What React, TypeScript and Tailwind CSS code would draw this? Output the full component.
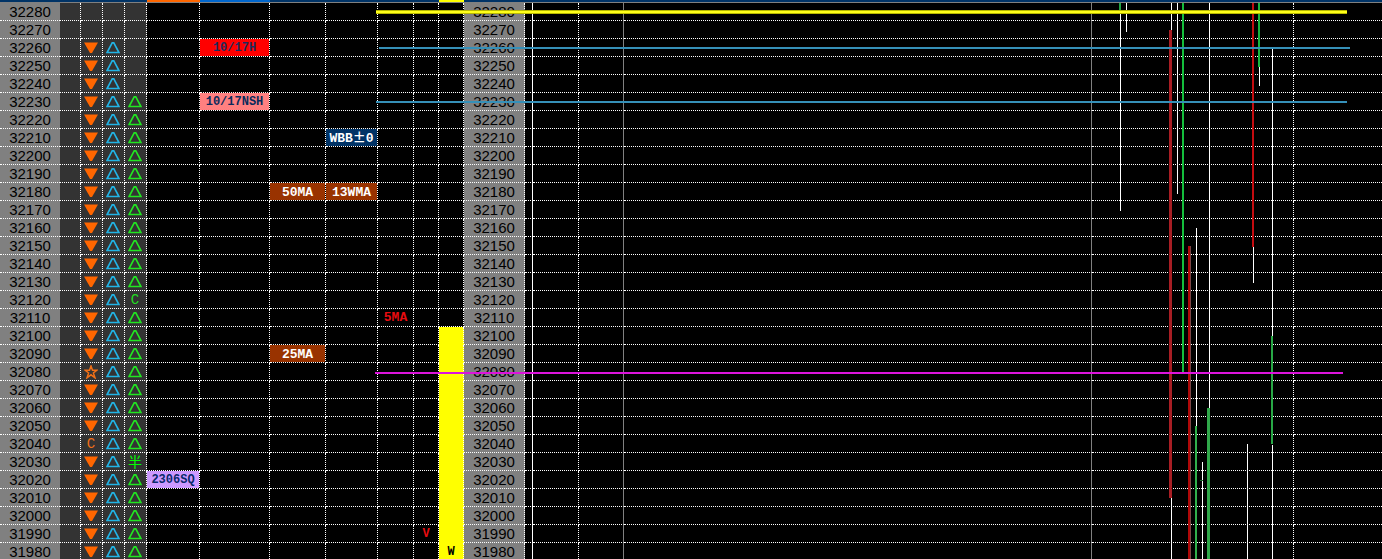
import type { ReactNode } from "react";
import clsx from "clsx";

type Tag = { col: string; text: ReactNode; className: string };

const TOP = 32280;
const prices = Array.from({ length: 31 }, (_, i) => TOP - i * 10);

// undefined width = the column that takes the spare room
const columns: { id: string; width?: number; head?: string; line?: string; cell?: string }[] = [
  { id: "price", width: 60, line: "no-line", cell: "bg-[#808080]" },
  { id: "s0", width: 21, cell: "bg-[#333333]" },
  { id: "s1", width: 22, cell: "bg-[#333333] pr-px" },
  { id: "s2", width: 22, cell: "bg-[#333333] pr-px" },
  { id: "s3", width: 22, cell: "bg-[#333333] pr-px" },
  { id: "sq", width: 53, head: "bg-[#ff6600]" },
  { id: "high", width: 70, head: "bg-[#0066cc]" },
  { id: "day", width: 56 },
  { id: "week", width: 52 },
  { id: "ma", width: 36 },
  { id: "v", width: 25 },
  { id: "w", width: 25, head: "bg-[#ffff00]" },
  { id: "price2", width: 61, cell: "bg-[#808080]" },
  { id: "c0", width: 8, line: "white" },
  { id: "c1", width: 46 },
  { id: "c2", width: 45, line: "gray" },
  { id: "c3", line: "gray" },
  { id: "c4", width: 202 },
  { id: "c5", width: 88, line: "no-line" },
];

const tags: Record<number, Tag[]> = {
  32260: [{ col: "high", text: "10/17H", className: "bg-[#ff0000] text-[#1f2a5c] text-[12px] pt-0.5" }],
  32230: [{ col: "high", text: "10/17NSH", className: "bg-[#ff8080] text-[#0a2a5c] text-[12px] pt-0.5" }],
  32210: [
    {
      col: "week",
      text: (
        <>
          WBB<span className="font-['Noto_Sans_CJK_JP',sans-serif]">±</span>0
        </>
      ),
      className: "bg-[#003366] text-white text-[13px]",
    },
  ],
  32180: [
    { col: "day", text: "50MA", className: "bg-[#993300] text-white text-[13px] pt-0.5" },
    { col: "week", text: "13WMA", className: "bg-[#993300] text-white text-[13px] pt-0.5" },
  ],
  32110: [{ col: "ma", text: "5MA", className: "text-[#e80c10] text-[13px]" }],
  32090: [{ col: "day", text: "25MA", className: "bg-[#993300] text-white text-[13px] pt-0.5" }],
  32020: [{ col: "sq", text: "2306SQ", className: "bg-[#cc99ff] text-[#0a2a6c] text-[12px] pt-0.5" }],
  31990: [{ col: "v", text: "V", className: "text-[#e80c10] text-[12px] pt-0.5" }],
  31980: [{ col: "w", text: "W", className: "text-black text-[12px] pt-0.5" }],
};

const levels = [
  { id: "y", className: "top-[10px] left-[376px] right-[35px] h-1 border-y border-[#b8b800] bg-[#ffff1a]" },
  { id: "b1", className: "top-[47px] left-[379px] right-[32px] h-[2px] bg-[#3590b8]" },
  { id: "b2", className: "top-[101px] left-[376px] right-[35px] h-[2px] bg-[#3590b8]" },
  { id: "m", className: "top-[372px] left-[375px] right-[39px] h-[2px] bg-[#dc14dc]" },
];

// [x, top, bottom]
const wicks = [
  [40, 3, 211],
  [46, 3, 32],
  [91, 3, 30],
  [91, 498, 561],
  [97, 3, 194],
  [116, 228, 426],
  [122, 462, 561],
  [129, 3, 408],
  [167, 444, 561],
  [173, 247, 283],
  [179, 67, 86],
  [192, 49, 336],
  [192, 445, 561],
];

// [x, width, top, bottom, colour]
const bodies: [number, number, number, number, string][] = [
  [39, 2, 3, 13, "#22a545"],
  [89, 3, 30, 498, "#a81e24"],
  [102, 2, 3, 373, "#14be3c"],
  [108, 2, 246, 561, "#b00808"],
  [110, 1, 246, 561, "#7c4444"],
  [115, 2, 426, 561, "#30b04c"],
  [127, 3, 408, 561, "#30a84a"],
  [172, 2, 3, 247, "#c40c10"],
  [178, 2, 3, 67, "#18b43c"],
  [191, 2, 336, 444, "#28a846"],
  [120, 3, 480, 481, "#1c6a2c"],
];

function Down() {
  return (
    <svg aria-hidden="true" className="mx-auto block h-3 w-3.5" viewBox="0 0 14 12">
      <path d="M0 0.5H14L8 11H6Z" fill="#ff6600" />
    </svg>
  );
}

function Up({ color }: { color: string }) {
  return (
    <svg aria-hidden="true" className="mx-auto block h-3 w-3.5" viewBox="0 0 14 12">
      <path d="M1.1 10.5L6.2 0.9H7.8L12.9 10.5Z" fill="none" stroke={color} strokeWidth="1.6" />
    </svg>
  );
}

function Star() {
  return (
    <svg aria-hidden="true" className="mx-auto block h-3.5 w-3.5" viewBox="0 0 14 14">
      <path
        d="M7 1L8.5 5.2H13L9.4 8L11 12.8L7 9.8L3 12.8L4.6 8L1 5.2H5.5Z"
        fill="none"
        stroke="#f07018"
        strokeWidth="1.5"
      />
    </svg>
  );
}

function signal(col: string, price: number): ReactNode {
  if (price > 32260) return null;
  if (col === "s1") {
    if (price === 32080) return <Star />;
    if (price === 32040) return <div className="pt-0.5 text-[14px] text-[#f07018]">C</div>;
    return <Down />;
  }
  if (col === "s2") return <Up color="#22b4e6" />;
  if (col === "s3" && price <= 32230) {
    if (price === 32120) return <div className="pt-0.5 text-[14px] text-[#22dc22]">C</div>;
    if (price === 32030)
      return <div className="font-['Noto_Sans_CJK_JP',sans-serif] text-[14px] text-[#00ff00]">半</div>;
    return <Up color="#22e622" />;
  }
  return null;
}

function lineClass(line?: string) {
  if (line === "no-line") return "";
  if (line === "white") return "border-r [border-right-style:solid] border-r-white";
  if (line === "gray") return "border-r [border-right-style:solid] border-r-[#808080]";
  return "border-r [border-right-style:dotted] border-r-white";
}

export default function App() {
  return (
    <main className="relative h-screen overflow-hidden bg-black">
      <table className="w-full table-fixed border-separate border-spacing-0 font-['Liberation_Mono','Noto_Sans_CJK_JP',monospace]">
        <colgroup>
          {columns.map((c) => (
            <col key={c.id} style={{ width: c.width }} />
          ))}
        </colgroup>
        <thead>
          <tr className="h-[3px]">
            {columns.map((c) => (
              <td key={c.id} className={clsx("border-b border-[#808080] p-0", c.head ?? "bg-[#003366]")} />
            ))}
          </tr>
        </thead>
        <tbody>
          {prices.map((price) => (
            <tr key={price} className="h-[18px]">
              {columns.map((c) => {
                const tag = tags[price]?.find((t) => t.col === c.id);
                const isPrice = c.id === "price" || c.id === "price2";
                const filled = c.id === "w" && price <= 32100;
                return (
                  <td
                    key={c.id}
                    className={clsx(
                      "border-b p-0 text-center align-middle leading-[15px] whitespace-nowrap",
                      filled
                        ? "border-b-[#ffff00] bg-[#ffff00] [border-bottom-style:solid]"
                        : "border-b-white [border-bottom-style:dotted]",
                      lineClass(c.line),
                      c.cell,
                      isPrice && "font-['Liberation_Sans',sans-serif] text-[15px] text-black",
                    )}
                  >
                    {isPrice && <div>{price}</div>}
                    {tag && (
                      <div className={clsx("flex h-[17px] items-center justify-center font-bold", tag.className)}>
                        <span>{tag.text}</span>
                      </div>
                    )}
                    {/^s\d$/.test(c.id) && signal(c.id, price)}
                  </td>
                );
              })}
            </tr>
          ))}
        </tbody>
      </table>

      <svg
        aria-hidden="true"
        className="absolute top-0 right-0 h-[561px] w-[302px]"
        viewBox="0 0 302 561"
        shapeRendering="crispEdges"
      >
        {wicks.map(([x, y1, y2]) => (
          <rect key={`${x}-${y1}`} x={x} y={y1} width="1" height={y2 - y1} fill="#ffffff" />
        ))}
        {bodies.map(([x, w, y1, y2, fill]) => (
          <rect key={`${x}-${y1}`} x={x} y={y1} width={w} height={y2 - y1} fill={fill} />
        ))}
      </svg>

      {levels.map((l) => (
        <div key={l.id} className={clsx("absolute", l.className)} />
      ))}
    </main>
  );
}
